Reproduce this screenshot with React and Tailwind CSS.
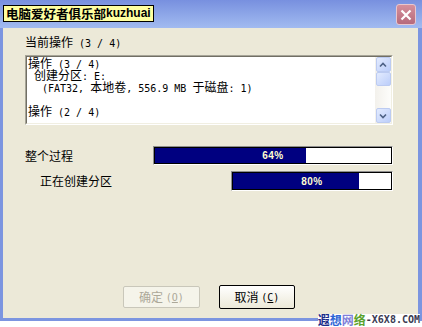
import React from 'react';

const ascii = /([\x20-\x7e]+)/;

// SimSun-like: half-width ASCII runs at 6px per char, CJK at 12px
function Mixed({ text }) {
  return text.split(ascii).map((part, i) =>
    /^[\x20-\x7e]+$/.test(part) ? (
      <span key={i} className="font-['DejaVu_Sans_Mono',monospace] text-[10px]">{part}</span>
    ) : (
      part
    )
  );
}

function Chevron({ up }) {
  return (
    <svg width="8" height="6" viewBox="0 0 8 6">
      <path d={up ? 'M1 4.5 L4 1.5 L7 4.5' : 'M1 1.5 L4 4.5 L7 1.5'} fill="none" stroke="#4d6185" strokeWidth="1.6" />
    </svg>
  );
}

function Progress({ pct, className }) {
  return (
    <div className={`border border-t-[#8e8e8e] border-l-[#8e8e8e] border-b-white border-r-white ${className}`}>
      <div className="relative flex h-full border border-black bg-white">
        <div className="h-full bg-[#000080]" style={{ width: pct + '%' }} />
        <div className="absolute inset-0 flex items-center justify-center font-['Liberation_Sans',sans-serif] text-[10px] font-bold tracking-[0.5px] text-[#ffffd0]">
          {pct}%
        </div>
      </div>
    </div>
  );
}

export default function App() {
  const log = [
    { text: '操作 (3 / 4)', pad: 'pl-[1px]' },
    { text: '创建分区: E:', pad: 'pl-[7px]' },
    { text: '(FAT32, 本地卷, 556.9 MB 于磁盘: 1)', pad: 'pl-[15px]' },
    { text: ' ', pad: 'pl-[1px]' },
    { text: '操作 (2 / 4)', pad: 'pl-[1px]' },
  ];

  return (
    <div className="relative flex h-[327px] w-[422px] flex-col overflow-hidden bg-white font-['Noto_Sans_CJK_SC','Liberation_Sans',sans-serif] text-[12px] text-black">
      {/* window */}
      <div className="flex h-[321px] flex-col bg-[#7c95e0]">
        {/* title bar */}
        <div className="flex h-[28px] items-start justify-between bg-linear-to-b from-[#7890df] to-[#a2bbf0] pl-[3px] pr-[6px]">
          <div className="mt-[5px] flex h-[17px] items-center border border-black bg-[#ffffa0] px-[2px] text-[12.5px] font-bold leading-[15px]">
            电脑爱好者俱乐部<span className="font-['Liberation_Sans',sans-serif] text-[12px]">kuzhuai</span>
          </div>
          <div className="mt-[4px] flex h-[21px] w-[20px] items-center justify-center rounded-[3px] border border-[#e9c6cd] bg-linear-to-b from-[#d6909c] to-[#b66a7c]">
            <svg width="12" height="12" viewBox="0 0 12 12">
              <path d="M1.5 1.5 L10.5 10.5 M10.5 1.5 L1.5 10.5" stroke="white" strokeWidth="2.2" />
            </svg>
          </div>
        </div>

        {/* body */}
        <div className="mb-[3px] ml-[3px] mr-[4px] flex flex-1 flex-col bg-[#ece9d8] pl-[22px] pt-[8px]">
          <div className="whitespace-pre leading-[12px]">
            <Mixed text="当前操作 (3 / 4)" />
          </div>

          <div className="mt-[5px] h-[70px] w-[368px] border border-t-[#a7a598] border-l-[#a7a598] border-b-white border-r-white">
            <div className="flex h-full border border-t-[#716f64] border-l-[#716f64] border-b-[#f1efe2] border-r-[#f1efe2] bg-white">
              <div className="flex-1 overflow-hidden whitespace-pre leading-[12px]">
                {log.map((l, i) => (
                  <div key={i} className={`h-[12px] ${l.pad}`}>
                    <Mixed text={l.text} />
                  </div>
                ))}
              </div>
              <div className="flex w-[16px] flex-col items-center bg-linear-to-r from-[#f3f1ec] to-[#fdfdfb]">
                <div className="flex h-[15px] w-[15px] items-center justify-center rounded-[2px] border border-[#bccbf1] bg-linear-to-br from-[#e3ebfe] to-[#bccefa]">
                  <Chevron up />
                </div>
                <div className="h-[14px] w-[15px] rounded-[2px] border border-[#bccbf1] bg-linear-to-br from-[#e3ebfe] to-[#bccefa]" />
                <div className="flex-1" />
                <div className="flex h-[15px] w-[15px] items-center justify-center rounded-[2px] border border-[#bccbf1] bg-linear-to-br from-[#e3ebfe] to-[#bccefa]">
                  <Chevron />
                </div>
              </div>
            </div>
          </div>

          <div className="mt-[21px] flex w-[368px] items-center justify-between">
            <span>整个过程</span>
            <Progress pct={64} className="h-[19px] w-[240px]" />
          </div>
          <div className="mt-[6px] flex w-[368px] items-center justify-between pl-[15px]">
            <span>正在创建分区</span>
            <Progress pct={80} className="h-[20px] w-[162px]" />
          </div>

          <div className="mt-[94px] flex items-start gap-[19px] pl-[98px]">
            <div className="mt-[1px] flex h-[22px] w-[77px] items-center justify-center rounded-[2px] border border-[#c9c7ba] bg-[#f5f4ea] whitespace-pre text-[#aca899]">
              确定 <span className="font-['DejaVu_Sans_Mono',monospace] text-[10px]">(<u>O</u>)</span>
            </div>
            <div className="flex h-[24px] w-[76px] items-center justify-center rounded-[2px] border border-black bg-linear-to-b from-[#ffffff] to-[#ece9d8] whitespace-pre">
              取消 <span className="font-['DejaVu_Sans_Mono',monospace] text-[10px]">(<u>C</u>)</span>
            </div>
          </div>
        </div>
      </div>

      {/* watermark stamp */}
      <div className="absolute bottom-[1px] right-[2px] flex items-center bg-white text-[12px] font-bold leading-[12px]">
        <span className="text-[#1a2d8a]">遐</span>
        <span className="text-[#2e66d6]">想</span>
        <span className="text-[#7f7fd9]">网</span>
        <span className="text-[#5aa22c]">络</span>
        <span className="font-['DejaVu_Sans_Mono',monospace] text-[10px] text-[#3a3a52]">-X6X8.COM</span>
      </div>
    </div>
  );
}
